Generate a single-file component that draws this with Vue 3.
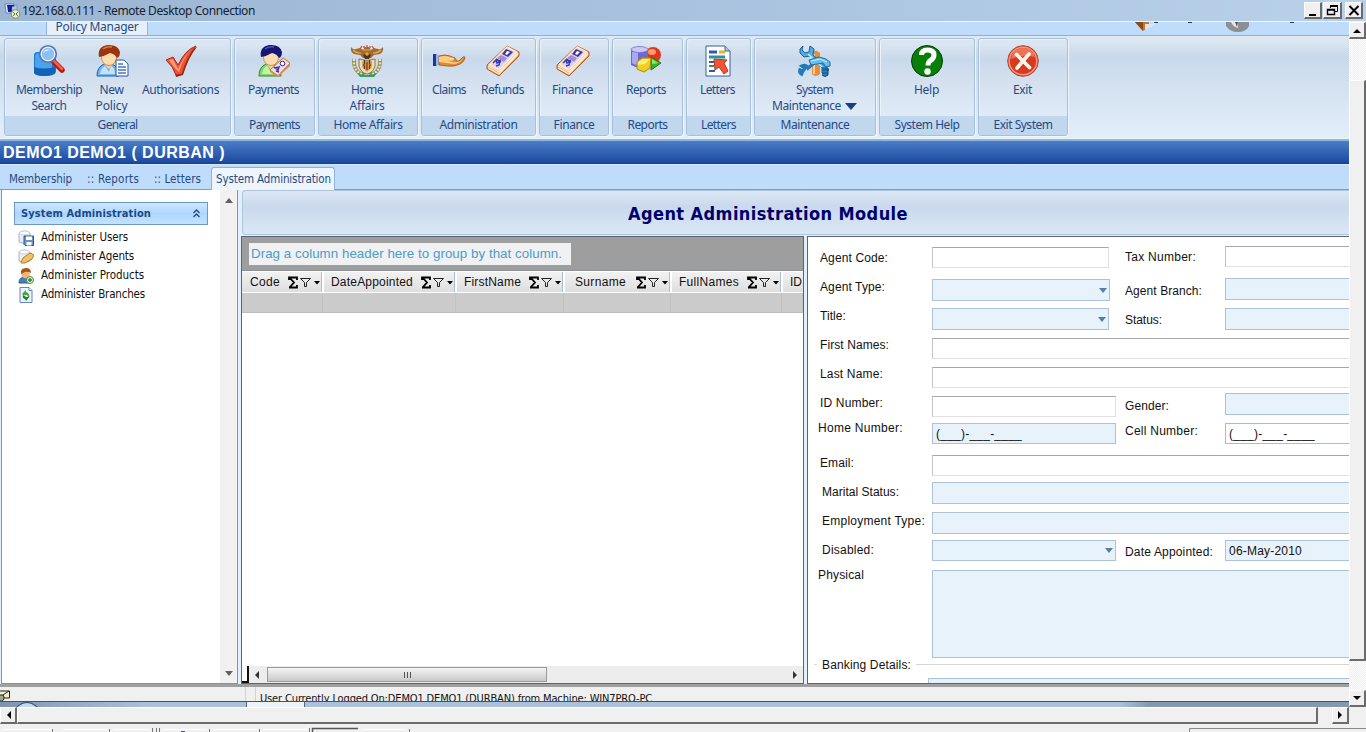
<script setup>
// Spreads the letters of a caption so that it fills the given width.
const vFit = {
  mounted(el, { value }) {
    if (!value) return
    const natural = el.getBoundingClientRect().width
    el.style.letterSpacing = (value - natural) / el.textContent.trim().length + 'px'
  }
}

const groups = [
  { name: 'General', fit: 40, width: 227, items: [
    { icon: 'search', w: 88, lines: [['Membership', 66], ['Search', 35]] },
    { icon: 'person', w: 37, lines: [['New', 24], ['Policy', 32]] },
    { icon: 'check', w: 101, lines: [['Authorisations', 77]] } ] },
  { name: 'Payments', fit: 51, width: 81, items: [{ icon: 'payer', w: 77, lines: [['Payments', 51]] }] },
  { name: 'Home Affairs', fit: 69, width: 100, items: [{ icon: 'crest', w: 96, lines: [['Home', 32], ['Affairs', 35]] }] },
  { name: 'Administration', fit: 78, width: 115, items: [
    { icon: 'hand', w: 54, lines: [['Claims', 34]] },
    { icon: 'money', w: 53, lines: [['Refunds', 43]] } ] },
  { name: 'Finance', fit: 41, width: 70, items: [{ icon: 'money', w: 65, lines: [['Finance', 41]] }] },
  { name: 'Reports', fit: 40, width: 71, items: [{ icon: 'reports', w: 66, lines: [['Reports', 40]] }] },
  { name: 'Letters', fit: 35, width: 65, items: [{ icon: 'letter', w: 61, lines: [['Letters', 35]] }] },
  { name: 'Maintenance', fit: 69, width: 122, items: [{ icon: 'tools', w: 119, lines: [['System', 37], ['Maintenance', 69, true]] }] },
  { name: 'System Help', fit: 65, width: 96, items: [{ icon: 'help', w: 93, lines: [['Help', 25]] }] },
  { name: 'Exit System', fit: 59, width: 90, items: [{ icon: 'exit', w: 87, lines: [['Exit', 19]] }] }
]

const navItems = [
  { text: 'Administer Users', icon: 'disk', fit: 87 },
  { text: 'Administer Agents', icon: 'edit', fit: 93 },
  { text: 'Administer Products', icon: 'user', fit: 103 },
  { text: 'Administer Branches', icon: 'sync', fit: 104 }
]

const columns = [
  { t: 'Code', w: 81, fit: 30, pad: 8 },
  { t: 'DateAppointed', w: 133, fit: 82, pad: 7 },
  { t: 'FirstName', w: 108, fit: 57, pad: 7 },
  { t: 'Surname', w: 107, fit: 51, pad: 10 },
  { t: 'FullNames', w: 111, fit: 60, pad: 7 },
  { t: 'ID', w: 21, fit: 12, pad: 7, bare: true }
]

// l: label [text, indent, top, width]; f: field [kind, width, top, height, text]
const rows = [
  { h: 35, l: ['Agent Code:', 12, 13, 68], f: ['plain', 177, 10, 21], l2: ['Tax Number:', 12, 71], f2: ['plain', 9, 21] },
  { h: 31, l: ['Agent Type:', 12, 7, 65], f: ['combo', 178, 7, 22], l2: ['Agent Branch:', 11, 77], f2: ['tint', 6, 22] },
  { h: 29, l: ['Title:', 12, 5, 26], f: ['combo', 177, 5, 22], l2: ['Status:', 9, 37], f2: ['tint', 5, 22] },
  { h: 29, l: ['First Names:', 12, 5, 69], f: ['plain', 0, 6, 21] },
  { h: 29, l: ['Last Name:', 12, 5, 63], f: ['plain', 0, 6, 21] },
  { h: 28, l: ['ID Number:', 12, 5, 63], f: ['plain', 184, 6, 21], l2: ['Gender:', 8, 44], f2: ['tint', 3, 22] },
  { h: 29, l: ['Home Number:', 10, 2, 85], f: ['tint', 184, 5, 21, '(___)-___-____', 86], l2: ['Cell Number:', 5, 73], f2: ['outlined', 5, 21, '(___)-___-____', 86] },
  { h: 30, l: ['Email:', 12, 8, 34], f: ['plain', 0, 8, 21] },
  { h: 29, l: ['Marital Status:', 14, 7, 77], f: ['tint', 0, 5, 22] },
  { h: 29, l: ['Employment Type:', 14, 7, 103], f: ['tint', 0, 6, 22] },
  { h: 30, l: ['Disabled:', 14, 7, 52], f: ['combo', 184, 5, 21], l2: ['Date Appointed:', 9, 88], f2: ['tint', 5, 21, '06-May-2010', 73] },
  { h: 93, l: ['Physical', 10, 2, 46], f: ['tint', 0, 5, 88] }
]
</script>

<template>
  <div class="window">
    <header class="titlebar">
      <svg class="rdp" width="17" height="16" viewBox="0 0 17 16">
        <path d="M1 1h9v9H2z" fill="#eef3fb" stroke="#6780b5" />
        <path d="M3 2h7v7H4z" fill="#1019a8" />
        <path d="M8 4l5-2v9l-5-1z" fill="#b7c6e2" stroke="#7184ad" stroke-width=".6" />
        <circle cx="11.5" cy="11" r="4.3" fill="#e6efd5" stroke="#75905b" />
        <path d="M9 9l2 2-2 2M14 9l-2 2 2 2" fill="none" stroke="#4f752e" />
      </svg>
      <span v-fit="233" class="title">192.168.0.111 - Remote Desktop Connection</span>
      <div class="winbtns">
        <b class="wb"><svg width="14" height="13"><path d="M3 10h7v2H3z" /></svg></b>
        <b class="wb w19"><svg width="14" height="13" fill="none" stroke="#000"><path d="M5.500 4V1.500h7v6H10" /><path d="M5 2h8" stroke-width="2" /><path d="M2.500 5.500h7v5h-7zM2 6h8" stroke-width="1.400" /></svg></b>
        <b class="wb close"><svg width="14" height="13"><path d="M2.500 2l9 9M11.500 2l-9 9" stroke="#000" stroke-width="2" /></svg></b>
      </div>
    </header>

    <div class="viewport">
      <div class="remote">
        <div class="tabstrip">
          <div class="ptab"><span v-fit="83">Policy Manager</span></div>
          <svg class="quick" width="180" height="13" viewBox="1130 22 180 13">
            <path d="M1135 22h14v5l-6 4z" fill="#c67727" /><path d="M1135 22l8 9v-9z" fill="#8e4a16" />
            <path d="M1145 24h8v-2h4l-4 4-8 4z" fill="#dbe6f5" /><path d="M1154 22h4M1188 22h4M1290 22h4" stroke="#28394f" stroke-width="2" />
            <path d="M1226 22h23v4q-3 6-11 6t-12-6z" fill="#8c9096" /><path d="M1231 22h7v6q-5-1-7-6z" fill="#e6e6e4" /><path d="M1235 22l2 5 1-5z" fill="#555" />
          </svg>
        </div>

        <div class="ribbon">
          <section v-for="g in groups" :key="g.name" class="group" :style="{ width: g.width + 'px' }">
            <div class="items">
              <div v-for="it in g.items" :key="it.icon" class="item" :style="{ width: it.w + 'px' }">
                <svg class="ico" width="32" height="32" viewBox="0 0 32 32">
                  <template v-if="it.icon === 'search'">
                    <path d="M1 10q0-3 4-3h14q4 0 4 3v17q-1 4-11 4T1 28z" fill="#1679d2" />
                    <path d="M2 10q1-2 4-2h13v19q-9 4-17 0z" fill="#49a4ed" />
                    <path d="M1 22q10 3 21 0v6q-4 3-11 3T1 28z" fill="#1262b7" />
                    <path d="M21 17l8 8" stroke="#b21c12" stroke-width="5.500" stroke-linecap="round" />
                    <path d="M21 16l8 8" stroke="#f0614b" stroke-width="2.500" stroke-linecap="round" />
                    <circle cx="15" cy="9" r="8.300" fill="#b9d9f7" stroke="#5372b0" stroke-width="1.600" />
                    <circle cx="15" cy="9" r="6.700" fill="#8fbff0" stroke="#edf6ff" />
                    <path d="M10 8q2-5 8-3-5 0-8 3" fill="#fff" />
                  </template>
                  <template v-if="it.icon === 'person' || it.icon === 'payer'">
                    <path d="M1 31q0-9 7-12h8q7 3 7 12z" :fill="it.icon === 'person' ? '#73b5ee' : '#86d66a'" :stroke="it.icon === 'person' ? '#1b60ae' : '#36872c'" />
                    <path d="M4 29q1-6 5-8l4 6 2-6q4 2 4 8z" :fill="it.icon === 'person' ? '#c3e4ff' : '#c4f1ac'" />
                    <path d="M8 19l5 5 4-5-1-3H9z" fill="#f9cfa0" />
                    <ellipse cx="13" cy="12.500" rx="7.500" ry="8" fill="#ffdcae" stroke="#ba7c42" stroke-width=".8" />
                    <path d="M3 12Q1 2 11 0q11-1 13 7 0 5-3 6-2-4-7-5-5 3-11 4z" :fill="it.icon === 'person' ? '#9d3411' : '#171773'" />
                    <path d="M7 4q4-3 9-2" fill="none" :stroke="it.icon === 'person' ? '#dc7a3b' : '#4953c4'" stroke-width="1.500" />
                    <template v-if="it.icon === 'person'">
                      <path d="M20 15h8l4 4v12H20z" fill="#f8fbff" stroke="#2f5898" /><path d="M22 19h5M22 22h8M22 25h8M22 28h8" stroke="#4a79bf" stroke-width="1.300" />
                    </template>
                    <template v-else>
                      <path d="M25 13l7 5-12 13-8-6z" fill="#ffe6c6" stroke="#bd6c3b" /><path d="M32 18v3L20 32l-8-5v-2l8 5z" fill="#d98a4c" /><path d="M24 15l6 4-10 10-6-4z" fill="#e7d9f1" />
                      <circle cx="24.500" cy="18.500" r="2.300" fill="#fff" stroke="#28239a" /><path d="M16 22l4 3 1-3-4 1zM18 26l3 1" fill="none" stroke="#3838aa" stroke-width="1.500" />
                    </template>
                  </template>
                  <template v-if="it.icon === 'check'">
                    <path d="M2 16l7-3 4 8Q20 5 32 2q-8 9-14 28l-7 2Q9 22 2 16z" fill="#842315" />
                    <path d="M1 15l7-3 5 8Q20 5 31 1 22 12 17 29l-6 1Q8 21 1 15z" fill="#ed5235" stroke="#ad2b19" />
                    <path d="M4 15l4-1 5 10Q20 9 27 4q-8 7-13 23-5-4-10-12" fill="#ff9a7d" />
                  </template>
                  <template v-if="it.icon === 'crest'">
                    <path d="M0 2q2 3 5 2l4-1 3 2 2-3h4l2 3 3-2 4 1q3 1 5-2 1 5-3 7l-6 1-3 3h-8L9 10 3 9Q-1 7 0 2z" fill="#a66a2a" />
                    <path d="M2 5q3 3 8 3M30 5q-3 3-8 3M12 5h8" fill="none" stroke="#e0ae62" stroke-width="1.200" />
                    <path d="M9 4l2-3M13 3V1M16 3V0M19 3V1M23 4l-2-3" stroke="#cf5138" stroke-width="1.300" />
                    <path d="M12 10q4-3 8 0l-2 4h-4z" fill="#51321f" /><circle cx="16" cy="9" r="1.800" fill="#d9a445" />
                    <path d="M3 14q-1 12 8 15l5-3 5 3q9-3 8-15" fill="none" stroke="#8f8a56" stroke-width="3.600" />
                    <path d="M3 14q-1 12 8 15M29 14q1 12-8 15" fill="none" stroke="#f1e5b8" stroke-width="2.200" stroke-dasharray="2 1.300" />
                    <path d="M8 14q8 3 16 0v7q-2 7-8 8-6-1-8-8z" fill="#eadfb9" stroke="#75602b" stroke-width=".8" />
                    <path d="M11 16h10v6l-5 5-5-5z" fill="#e0a03b" /><path d="M13.500 15v9M18.500 15v9M16 17v8" stroke="#4f3a28" stroke-width="1.200" /><path d="M12 20h2M18 20h2" stroke="#c23f2a" stroke-width="2" />
                    <path d="M6 28q10 4 20 0l-3 4H9z" fill="#3a9c66" />
                  </template>
                  <template v-if="it.icon === 'hand'">
                    <path d="M0 9h4v12H0z" fill="#1835a2" /><path d="M3 9l3 1v10l-3 1z" fill="#9ab9f0" />
                    <path d="M6 11q6-2 11 0l5 2q2 2 1 3h3l4-4q2-1 2 1-1 4-5 6-6 3-12 2l-9-1z" fill="#e28a2c" stroke="#9c5514" stroke-width=".8" />
                    <path d="M6 12q6-2 11 0l4 2-2 2-6-1 6 2q7 1 11-3-4 5-10 5L6 17z" fill="#ffcb7d" />
                    <path d="M17 14q2-2 4 0" fill="none" stroke="#fff0c0" />
                  </template>
                  <template v-if="it.icon === 'money'">
                    <path d="M20 1l12 6v4L12 31 0 24v-4z" fill="#e39455" stroke="#b65a2c" />
                    <path d="M1 23l11 6 19-20M1 21l11 6 19-19" fill="none" stroke="#fff0d2" stroke-width="1.200" />
                    <path d="M20 1l11 6-19 19-11-6z" fill="#ffe9d2" /><path d="M20 3l8 4-16 17-8-5z" fill="#ddd0f0" />
                    <path d="M19 4l7 3-5 5-6-3z" fill="#3a35a0" /><path d="M20 6l3 1-3 3-2-1z" fill="#fff" />
                    <path d="M14 10l6 3-3 4-7-4z" fill="#a98ad6" /><path d="M6 18l3-3 1 3 3-2-1 4-3 1M9 14l5 3" fill="none" stroke="#343aad" stroke-width="1.500" />
                  </template>
                  <template v-if="it.icon === 'reports'">
                    <circle cx="23" cy="10" r="8" fill="#dd371e" /><ellipse cx="22" cy="7" rx="4" ry="3" fill="#ff9a72" />
                    <path d="M1 4q8-5 17 0v16q-8 5-17 0z" fill="#6d69cf" /><path d="M2 7h6v13q-4 0-6-2z" fill="#aaa8f2" /><ellipse cx="9.500" cy="4.500" rx="8.500" ry="3" fill="#c8c8fb" stroke="#6c69bb" stroke-width=".7" />
                    <path d="M21 12l10 6-10 7z" fill="#38b52c" stroke="#21751a" /><path d="M22 14l6 4-6 1z" fill="#8bed67" />
                    <path d="M7 17l5-4h9l-1 10-6 4-7-3z" fill="#f0cf24" stroke="#a98c13" /><path d="M8 17l5-3h7l-5 5-7 1z" fill="#fff073" />
                  </template>
                  <template v-if="it.icon === 'letter'">
                    <path d="M4 1h19l5 5v25H4z" fill="#fff" stroke="#36619b" /><path d="M23 1v5h5" fill="#b3cbea" stroke="#36619b" />
                    <path d="M7 7h8" stroke="#3158ae" stroke-width="3" /><path d="M17 7h6" stroke="#e3b52a" stroke-width="3" /><path d="M7 12h16" stroke="#2893a2" stroke-width="3" />
                    <path d="M7 17h6M7 26h6" stroke="#315ca4" stroke-width="2" /><path d="M7 21h5" stroke="#2b9758" stroke-width="2" />
                    <path d="M12 14l13 1-3 3 4 8-4 3-5-7-4 3z" fill="#f35434" stroke="#b9351e" />
                  </template>
                  <template v-if="it.icon === 'tools'">
                    <path d="M13 7q4-3 8 1v21q-5 4-8 0z" fill="#e88b3f" /><path d="M15 9v20" stroke="#ffcf8c" stroke-width="2" />
                    <path d="M4 30q-4-2-3-5l3 1 2-3-3-2q4-2 6 2l5-4" fill="none" stroke="#1f7cb8" stroke-width="3.400" />
                    <path d="M4 1L1 4v4l4 4 6-1 12 12v5h4l3-3-16-15 1-6-4-3-1 6-4 1-3-3z" fill="#4caee5" stroke="#155f96" />
                    <path d="M9 9l14 13" stroke="#c7f0ff" stroke-width="1.500" /><path d="M10 15l10-3q7 1 11 5v4l-4 1-3-4-12 2z" fill="#66bdf0" stroke="#236c9d" />
                    <path d="M12 16l9-2 7 3" fill="none" stroke="#c7f0ff" />
                    <path d="M23 23h6v7q-3 3-6 0M23 25h6M23 28h6" fill="#3180b3" stroke="#154b80" />
                  </template>
                  <template v-if="it.icon === 'help'">
                    <circle cx="16" cy="16" r="15.500" fill="#068006" stroke="#07380a" />
                    <path d="M10.500 10q0-5 6-5 6.500 0 6.500 5 0 3.500-3.500 5.500-2.500 1.500-2.500 5" fill="none" stroke="#fff" stroke-width="5" /><circle cx="16.500" cy="26.500" r="3.200" fill="#fff" />
                  </template>
                  <template v-if="it.icon === 'exit'">
                    <circle cx="16" cy="16" r="15.300" fill="#d83a21" stroke="#b44132" /><circle cx="16" cy="16" r="13.800" fill="none" stroke="#f29b80" stroke-width="1.500" />
                    <path d="M4 14Q5 3 16 3t12 9Q17 9 4 14" fill="#ef7454" /><path d="M9.500 9.500l13 13M22 9l-12 14" stroke="#fff5e9" stroke-width="3.700" stroke-linecap="round" />
                  </template>
                </svg>
                <div v-for="ln in it.lines" :key="ln[0]" class="cap"><span v-fit="ln[1]">{{ ln[0] }}</span><i v-if="ln[2]" class="drop"></i></div>
              </div>
            </div>
            <footer class="gname"><span v-fit="g.fit">{{ g.name }}</span></footer>
          </section>
        </div>

        <div class="branch"><span v-fit="222">DEMO1 DEMO1 ( DURBAN )</span></div>

        <nav class="tabs">
          <span class="t t1"><span v-fit="63">Membership</span></span>
          <span class="t t2"><span v-fit="52">:: Reports</span></span>
          <span class="t t3"><span v-fit="47">:: Letters</span></span>
          <span class="t active"><span v-fit="115">System Administration</span></span>
        </nav>

        <div class="body">
          <aside class="side">
            <div class="nav">
              <div class="navhead"><span v-fit="130">System Administration</span>
                <svg width="7" height="9" fill="none" stroke="#1b4a85" stroke-width="1.300"><path d="M.5 4l3-3 3 3M.5 8l3-3 3 3" /></svg>
              </div>
              <div v-for="n in navItems" :key="n.text" class="navitem">
                <svg width="16" height="16" viewBox="0 0 16 16">
                  <template v-if="n.icon === 'disk' || n.icon === 'edit'">
                    <path d="M1 3q5-4 11 0v9q-6 3-11 0z" fill="#e9eef4" stroke="#a6b2c2" /><ellipse cx="6.500" cy="3" rx="5" ry="2" fill="#fff" stroke="#b5bfcb" stroke-width=".7" />
                    <template v-if="n.icon === 'disk'"><path d="M6 6h9.500v9.500H7l-1-1z" fill="#6c93c7" stroke="#2d568f" /><path d="M8 6.500h6v3.500H8zM8.500 12h5v3.500h-5z" fill="#fff" /></template>
                    <path v-else d="M3 14l2-5 7-5 4 2-2 4-7 4z" fill="#f5c06a" stroke="#b77b2d" />
                  </template>
                  <template v-if="n.icon === 'user'">
                    <path d="M1 15q0-6 6-6t6 6z" fill="#437fc5" stroke="#29578f" /><circle cx="7.500" cy="6" r="4.300" fill="#f2b677" /><path d="M3 6Q2 0 8 0q5 0 5 5-4-2-6-1z" fill="#a55619" />
                    <circle cx="12" cy="12" r="3.500" fill="#e0f0d6" stroke="#4d8d3e" /><path d="M12 10v4M10 12h4" stroke="#32812b" stroke-width="1.400" />
                  </template>
                  <template v-if="n.icon === 'sync'">
                    <path d="M2 .5h9l3 3v12H2z" fill="#eaf3fe" stroke="#6487b5" /><path d="M11 .5v3h3" fill="#fff" stroke="#6487b5" />
                    <path d="M4 7l4-4v2q4 1 3 6l-2-3H6l1 2z" fill="#4aa72e" /><path d="M12 9l-4 5-1-2q-3-1-2-4l3 2h2z" fill="#287b23" />
                  </template>
                </svg>
                <span v-fit="n.fit">{{ n.text }}</span>
              </div>
            </div>
            <div class="sidescroll"><i class="up"></i><i class="down"></i></div>
          </aside>

          <main class="main">
            <div class="banner"><h1 v-fit="280">Agent Administration Module</h1></div>
            <div class="split">
              <section class="gridpanel">
                <div class="groupby"><div class="hint"><span v-fit="311">Drag a column header here to group by that column.</span></div></div>
                <div class="cols">
                  <div v-for="c in columns" :key="c.t" class="col" :class="{ last: c.bare }" :style="{ width: c.w + 'px', paddingLeft: c.pad + 'px' }">
                    <span v-fit="c.fit">{{ c.t }}</span>
                    <svg v-if="!c.bare" width="32" height="13" viewBox="0 0 32 13">
                      <path d="M1 4V1.500H9V4M1.500 1.500L6 6.500l-4.500 5M1 11.500H9V9" fill="none" stroke="#000" stroke-width="1.800" />
                      <path d="M12.500 2.500h10l-4 4v4h-2v-4z" fill="none" stroke="#222" /><path d="M26 5h6l-3 3.500z" />
                    </svg>
                  </div>
                </div>
                <div class="filters"><i v-for="c in columns" :key="c.t" :style="{ width: c.w + 'px' }"></i></div>
                <div class="empty"></div>
                <div class="hbar">
                  <i class="corner"></i><i class="la"></i><div class="thumb"><i></i><i></i><i></i></div><i class="ra"></i>
                </div>
              </section>

              <section class="form">
                <div v-for="r in rows" :key="r.l[0]" class="row" :style="{ height: r.h + 'px' }">
                  <label :style="{ paddingLeft: r.l[1] + 'px', paddingTop: r.l[2] + 'px' }"><span v-fit="r.l[3]">{{ r.l[0] }}</span></label>
                  <div class="field" :class="[r.f[0], { wide: !r.f[1] }]" :style="{ width: r.f[1] ? r.f[1] + 'px' : 'auto', marginTop: r.f[2] + 'px', height: r.f[3] + 'px' }">
                    <span v-if="r.f[4]" v-fit="r.f[5]">{{ r.f[4] }}</span>
                  </div>
                  <template v-if="r.l2">
                    <label :style="{ paddingTop: r.l2[1] + 'px' }"><span v-fit="r.l2[2]">{{ r.l2[0] }}</span></label>
                    <div class="field open" :class="r.f2[0]" :style="{ marginTop: r.f2[1] + 'px', height: r.f2[2] + 'px' }">
                      <span v-if="r.f2[3]" v-fit="r.f2[4]">{{ r.f2[3] }}</span>
                    </div>
                  </template>
                </div>
                <div class="bank"><span v-fit="89">Banking Details:</span></div>
                <div class="bankfield"></div>
              </section>
            </div>
          </main>
        </div>

        <div class="status">
          <svg width="11" height="12" viewBox="0 0 11 12"><path d="M0 1h9.500v7H4" fill="#f5efbd" stroke="#222" /><path d="M3 5l6-4M0 5q4-1 4 2 0 5-4 4" fill="#9aa88e" stroke="#222" /></svg>
          <span v-fit="392" class="who">User Currently Logged On:DEMO1 DEMO1 (DURBAN) from Machine: WIN7PRO-PC</span>
        </div>
        <div class="desk"><i class="orb"></i><i class="tasktab"></i></div>
      </div>

      <div class="vscroll">
        <b class="sb"><svg width="9" height="5"><path d="M0 5l4-4 4 4z" /></svg></b>
        <div class="vthumb"></div>
        <b class="sb"><svg width="9" height="5"><path d="M0 0h8L4 4z" /></svg></b>
      </div>
    </div>

    <div class="hscroll">
      <b class="sb"><svg width="5" height="9"><path d="M5 0v8L1 4z" /></svg></b>
      <div class="hthumb"></div>
      <b class="sb right"><svg width="5" height="9"><path d="M0 0v8l4-4z" /></svg></b>
    </div>
    <div class="bottom">
      <svg width="1366" height="8" viewBox="0 724 1366 8" fill="none">
        <path d="M52.500 729v3M109.500 729v3M152.500 728v4M156.500 728v4M159.500 728v4M209.500 729v3M259.500 729v3M309.500 728v4M409.500 729v3" stroke="#777" />
        <path d="M3 729.500h48M63 729.500h44M113 729.500h37M163 729.500h44M213 729.500h44M263 729.500h44M362 729.500h44" stroke="#fff" />
        <path d="M312.500 732v-3.500H358" stroke="#555" stroke-width="1.500" /><path d="M181 731.500h4" stroke="#556" />
        <path d="M1189.500 732v-3.500H1366" stroke="#888" />
      </svg>
    </div>
  </div>
</template>

<style>
html, body { margin: 0; overflow: hidden; }
</style>

<style scoped>
.window, .window * { box-sizing: border-box; }
.window { width: 1366px; height: 732px; display: flex; flex-direction: column; overflow: hidden; background: #f0f0f0; font: 12px/16px "Liberation Sans", Arial, sans-serif; color: #111; white-space: nowrap; }
span { display: inline-block; }
svg { flex: none; display: block; }
.titlebar { height: 22px; flex: none; display: flex; align-items: center; padding: 0 3px 0 4px; background: linear-gradient(90deg, #9bb5d2, #a8c2df 50%, #b9d1ea); border-bottom: 1px solid #eef5fb; }
.title { margin-left: 1px; font: 12px/16px "Noto Sans", sans-serif; color: #16202c; }
.winbtns { margin-left: auto; display: flex; }
.wb { width: 18px; height: 17px; background: #f0f0f0; border: 1px solid #fff; border-right: 2px solid #6b6b6b; border-bottom: 2px solid #6b6b6b; display: flex; align-items: center; justify-content: center; }
.w19 { width: 19px; margin-left: 1px; }
.close { margin-left: 3px; }

.viewport { height: 685px; flex: none; display: flex; }
.remote { width: 1349px; display: flex; flex-direction: column; overflow: hidden; }
.tabstrip { height: 14px; flex: none; background: #bfdcfa; border-bottom: 1px solid #8db2da; display: flex; overflow: hidden; }
.ptab { width: 102px; height: 14px; margin-left: 46px; background: #e5f0fc; border: 1px solid #95b7dd; border-width: 0 1px; color: #1f4a86; overflow: hidden; display: flex; justify-content: center; }
.ptab span { font: 12px/16px "Noto Sans", sans-serif; margin-top: -3px; }
.quick { margin-left: auto; margin-right: 39px; }

.ribbon { height: 103px; flex: none; padding: 2px 0 0 4px; display: flex; gap: 3px; background: linear-gradient(#dfe9f4, #dbe6f1 5px, #c8d9eb 20px, #d3e1f0 50px, #e3eefb); border-bottom: 1px solid #e8f4ff; }
.group { height: 98px; flex: none; border: 1px solid #a4c0de; border-radius: 3px; box-shadow: 1px 1px 0 #eef6ff, inset 1px 1px 0 #eaf3fc; background: linear-gradient(#dde7f2, #dae5f1 6px, #c9d9eb 20px, #d6e2f0 48px, #e0ebf8 77px); display: flex; flex-direction: column; overflow: hidden; }
.items { height: 77px; flex: none; display: flex; padding-top: 6px; }
.item { flex: none; display: flex; flex-direction: column; align-items: center; color: #1f4a86; font: 12px/16px "Noto Sans", sans-serif; }
.ico { margin-bottom: 5px; overflow: visible; }
.cap { height: 16px; display: flex; align-items: center; }
.drop { border: 6.5px solid transparent; border-top: 7px solid #15407c; border-bottom: 0; margin-left: 4px; }
.gname { flex: 1; background: #c1d7ee; color: #1f4a86; text-align: center; font: 12px/18px "Noto Sans", sans-serif; }

.branch { height: 26px; flex: none; padding: 2px 0 0 3px; background: linear-gradient(#4a7dc9, #1d4ca1 90%, #123f91); border-top: 2px solid #92b5d8; border-bottom: 1px solid #d5e7fa; color: #fff; font: bold 16px/20px "Liberation Sans", Arial, sans-serif; }
.tabs { height: 25px; flex: none; display: flex; background: #bfdcfa; border-bottom: 1px solid #7b9dbe; color: #1f4a86; font: 11.5px/15px "DejaVu Sans Condensed", "DejaVu Sans", sans-serif; padding: 2px 0 0 9px; }
.t { padding-top: 5px; flex: none; }
.t1 { width: 78px; }
.t2 { width: 67px; }
.t3 { width: 57px; }
.active { width: 124px; height: 23px; padding: 4px 0 0 4px; background: #eef5fd; border: 1px solid #8fb2d8; border-bottom: 0; border-radius: 3px 3px 0 0; }

.body { height: 494px; flex: none; display: flex; background: #e3effb; }
.side { width: 237px; margin-left: 1px; border: 1px solid #7796b8; border-top: 0; background: #fff; display: flex; flex: none; }
.nav { width: 218px; padding: 12px 12px 0; }
.navhead { width: 194px; height: 23px; border: 1px solid #6c98c7; background: linear-gradient(#cfe6ff, #aed7ff 50%, #c1e3ff); display: flex; align-items: center; justify-content: space-between; padding: 0 7px 0 6px; font: bold 11px/16px "DejaVu Sans Condensed", "DejaVu Sans", sans-serif; color: #174a89; margin-bottom: 3px; }
.navitem { height: 19px; display: flex; align-items: center; gap: 7px; padding-left: 4px; font: 11.5px/16px "DejaVu Sans Condensed", "DejaVu Sans", sans-serif; }
.navitem span { margin-top: -1px; }
.sidescroll { flex: 1; background: #f1f1f1; display: flex; flex-direction: column; justify-content: space-between; align-items: center; padding: 8px 0 7px; }
.up, .down { border: 4px solid transparent; border-top: 0; border-bottom: 5px solid #606060; }
.down { border-bottom: 0; border-top: 5px solid #606060; }

.main { margin-left: 3px; flex: 1; min-width: 0; display: flex; flex-direction: column; }
.banner { height: 45px; flex: none; margin: 0 0 1px 1px; border: 1px solid #adc5df; border-right: 0; border-radius: 4px 0 0 4px; background: linear-gradient(#dde8f5, #c9d9ec 35%, #dae7f6); padding-left: 385px; }
h1 { margin: 11px 0 0; display: inline-block; font: bold 18px/24px "DejaVu Sans Condensed", "DejaVu Sans", sans-serif; color: #00006c; }
.split { height: 448px; flex: none; display: flex; gap: 3px; }
.gridpanel { width: 563px; flex: none; border: 1px solid #596575; background: #fff; display: flex; flex-direction: column; overflow: hidden; }
.groupby { height: 34px; flex: none; background: #9e9e9e; padding: 6px 0 0 7px; border-bottom: 1px solid #8d9298; }
.hint { width: 322px; height: 22px; background: #f0f1f2; color: #4c9ccc; padding-left: 2px; font: 13.3px/22px "Liberation Sans", Arial, sans-serif; }
.cols { height: 22px; flex: none; display: flex; background: #e5e8ea; }
.col { flex: none; height: 22px; border: 1px solid #fff; border-width: 1px 1px 1px 0; background: linear-gradient(#f2f2f2, #dedede); box-shadow: inset -1px 0 #a9bed0; display: flex; align-items: center; justify-content: space-between; padding-right: 2px; }
.col + .col { border-left: 1px solid #fff; }
.col.last { padding-right: 0; border-right: 0; box-shadow: none; }
.filters { height: 20px; flex: none; display: flex; background: #cbcbcb; border-bottom: 1px solid #bdbdbd; }
.filters i { flex: none; border-right: 1px solid #bfc2c4; }
.empty { flex: 1; }
.hbar { height: 17px; flex: none; background: #ededed; display: flex; align-items: center; }
.corner { width: 7px; height: 17px; background: #fff; border: solid #111; border-width: 0 2px 2px 0; }
.la { margin-left: 6px; border: 4px solid transparent; border-left: 0; border-right: 4px solid #333; }
.thumb { width: 280px; height: 15px; margin-left: 8px; border: 1px solid #999; background: linear-gradient(#f6f6f6, #dedede 50%, #cacaca); display: flex; gap: 2px; justify-content: center; align-items: center; }
.thumb i { width: 1px; height: 6px; background: #555; }
.ra { margin-left: auto; margin-right: 6px; border: 4px solid transparent; border-right: 0; border-left: 4px solid #333; }

.form { flex: 1; min-width: 0; border: 1px solid #596575; border-right: 0; background: #fff; overflow: hidden; display: flex; flex-direction: column; }
.row { display: grid; grid-template-columns: 124px 193px 100px 1fr; flex: none; align-items: start; }
.field { border: 1px solid #a9bccd; padding-left: 3px; line-height: 20px; overflow: hidden; }
.wide { grid-column: 2 / -1; border-right: 0; }
.open { border-right: 0; }
.plain { background: #fff; border-color: #a5a7a9 #dfe1e4 #dfe1e4 #c0c4c8; }
.outlined { background: #fff; }
.tint, .combo { background: #e8f2fa; border-color: #abc2d8; }
.combo { display: flex; align-items: center; justify-content: flex-end; padding-right: 2px; }
.combo::after { content: ""; border: 4.5px solid transparent; border-top: 5px solid #547fa8; border-bottom: 0; }
.bank { height: 13px; flex: none; display: flex; align-items: center; gap: 5px; padding-left: 6px; }
.bank::before { content: ""; width: 3px; height: 1px; background: #d5d5d5; }
.bank::after { content: ""; flex: 1; height: 1px; background: #d5d5d5; }
.bankfield { margin: 7px 0 0 120px; height: 20px; flex: none; border: 1px solid #abc2d8; border-right: 0; background: #e8f2fa; }

.status { height: 18px; flex: none; border-top: 3px solid #a0a0a0; background: linear-gradient(90deg, transparent 245px, #d2d2d2 245px 246px, transparent 246px 255px, #d2d2d2 255px 256px, transparent 256px) #f0f0f0; border-bottom: 1px solid #42546b; display: flex; overflow: hidden; }
.status svg { margin-top: 3px; }
.who { margin: 4px 0 0 249px; font: 11px/15px "DejaVu Sans Condensed", "DejaVu Sans", sans-serif; }
.desk { height: 5px; flex: none; display: flex; background: linear-gradient(90deg, #7d94b0, #8fa8c6 60px, #aac1dc 150px, #aac1dc 1120px, #8598ad 1150px); overflow: hidden; }
.orb { width: 24px; height: 20px; margin-left: 15px; border-radius: 50%; border: 1px solid #334b68; background: #c5d8ed; }
.tasktab { width: 59px; margin-left: 207px; border: 1px solid #53687f; border-width: 0 1px; background: #edf2f7; }

.vscroll { width: 17px; display: flex; flex-direction: column; background: repeating-conic-gradient(#fff 0 25%, #efefef 0 50%) 0 0 / 2px 2px; }
.sb { width: 17px; height: 17px; flex: none; background: #f0f0f0; border: 1px solid #fff; border-right: 2px solid #6b6b6b; border-bottom: 2px solid #6b6b6b; display: flex; align-items: center; justify-content: center; }
.vthumb { height: 581px; margin: 41px 0 auto; flex: none; background: #f0f0f0; border: 1px solid #fff; border-right: 2px solid #6b6b6b; border-bottom: 2px solid #6b6b6b; }
.hscroll { height: 17px; flex: none; display: flex; background: #f0f0f0; }
.hthumb { width: 1301px; background: #f0f0f0; border: 1px solid #fff; border-right: 2px solid #6b6b6b; border-bottom: 2px solid #6b6b6b; }
.right { margin-left: 14px; }
.bottom { height: 8px; flex: none; background: #f0f0f0; }
</style>
